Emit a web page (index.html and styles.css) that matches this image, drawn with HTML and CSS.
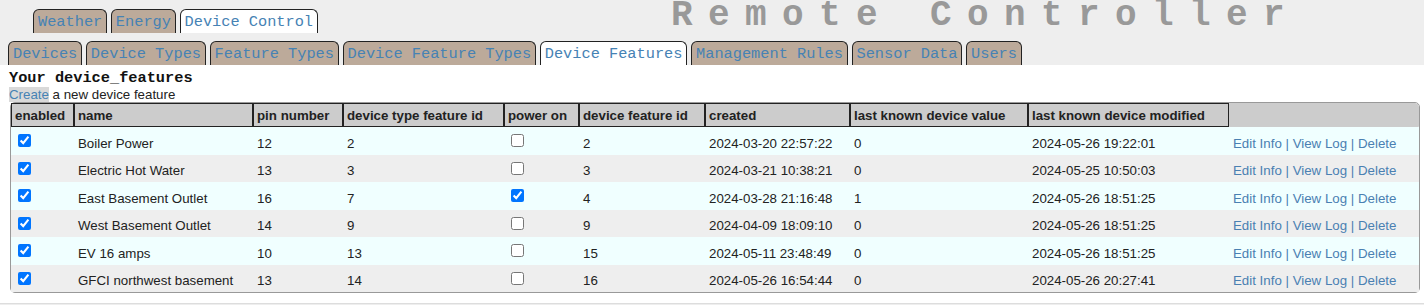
FILE: index.html
```html
<!DOCTYPE html>
<html lang="en">
<head>
    <meta charset="UTF-8">
    <meta name="viewport" content="width=device-width, initial-scale=1.0">
    <title>Remote Controller - Device Features</title>
    <link rel="stylesheet" href="styles.css">
</head>
<body>

    <header class="top">
        <div class="top-row">
            <nav class="tabs main-tabs">
                <a href="#" class="tab">Weather</a>
                <a href="#" class="tab">Energy</a>
                <a href="#" class="tab active">Device Control</a>
            </nav>
            <h1 class="title">Remote Controller</h1>
        </div>
        <nav class="tabs sub-tabs">
            <a href="#" class="tab">Devices</a>
            <a href="#" class="tab">Device Types</a>
            <a href="#" class="tab">Feature Types</a>
            <a href="#" class="tab">Device Feature Types</a>
            <a href="#" class="tab active">Device Features</a>
            <a href="#" class="tab">Management Rules</a>
            <a href="#" class="tab">Sensor Data</a>
            <a href="#" class="tab">Users</a>
        </nav>
    </header>

    <section class="content">
        <h2>Your device_features</h2>
        <p class="create-line"><a href="#" class="create">Create</a> a new device feature</p>

        <table class="features">
            <thead>
                <tr>
                    <th class="c-enabled">enabled</th>
                    <th class="c-name">name</th>
                    <th class="c-pin">pin number</th>
                    <th class="c-dtf">device type feature id</th>
                    <th class="c-power">power on</th>
                    <th class="c-df">device feature id</th>
                    <th class="c-created">created</th>
                    <th class="c-value">last known device value</th>
                    <th class="c-modified">last known device modified</th>
                    <th class="c-actions"></th>
                </tr>
            </thead>
            <tbody>
                <tr>
                    <td class="check"><input type="checkbox" checked></td>
                    <td>Boiler Power</td>
                    <td>12</td>
                    <td>2</td>
                    <td class="check"><input type="checkbox"></td>
                    <td>2</td>
                    <td>2024-03-20 22:57:22</td>
                    <td>0</td>
                    <td>2024-05-26 19:22:01</td>
                    <td class="actions"><a href="#">Edit Info</a> | <a href="#">View Log</a> | <a href="#">Delete</a></td>
                </tr>
                <tr>
                    <td class="check"><input type="checkbox" checked></td>
                    <td>Electric Hot Water</td>
                    <td>13</td>
                    <td>3</td>
                    <td class="check"><input type="checkbox"></td>
                    <td>3</td>
                    <td>2024-03-21 10:38:21</td>
                    <td>0</td>
                    <td>2024-05-25 10:50:03</td>
                    <td class="actions"><a href="#">Edit Info</a> | <a href="#">View Log</a> | <a href="#">Delete</a></td>
                </tr>
                <tr>
                    <td class="check"><input type="checkbox" checked></td>
                    <td>East Basement Outlet</td>
                    <td>16</td>
                    <td>7</td>
                    <td class="check"><input type="checkbox" checked></td>
                    <td>4</td>
                    <td>2024-03-28 21:16:48</td>
                    <td>1</td>
                    <td>2024-05-26 18:51:25</td>
                    <td class="actions"><a href="#">Edit Info</a> | <a href="#">View Log</a> | <a href="#">Delete</a></td>
                </tr>
                <tr>
                    <td class="check"><input type="checkbox" checked></td>
                    <td>West Basement Outlet</td>
                    <td>14</td>
                    <td>9</td>
                    <td class="check"><input type="checkbox"></td>
                    <td>9</td>
                    <td>2024-04-09 18:09:10</td>
                    <td>0</td>
                    <td>2024-05-26 18:51:25</td>
                    <td class="actions"><a href="#">Edit Info</a> | <a href="#">View Log</a> | <a href="#">Delete</a></td>
                </tr>
                <tr>
                    <td class="check"><input type="checkbox" checked></td>
                    <td>EV 16 amps</td>
                    <td>10</td>
                    <td>13</td>
                    <td class="check"><input type="checkbox"></td>
                    <td>15</td>
                    <td>2024-05-11 23:48:49</td>
                    <td>0</td>
                    <td>2024-05-26 18:51:25</td>
                    <td class="actions"><a href="#">Edit Info</a> | <a href="#">View Log</a> | <a href="#">Delete</a></td>
                </tr>
                <tr>
                    <td class="check"><input type="checkbox" checked></td>
                    <td>GFCI northwest basement</td>
                    <td>13</td>
                    <td>14</td>
                    <td class="check"><input type="checkbox"></td>
                    <td>16</td>
                    <td>2024-05-26 16:54:44</td>
                    <td>0</td>
                    <td>2024-05-26 20:27:41</td>
                    <td class="actions"><a href="#">Edit Info</a> | <a href="#">View Log</a> | <a href="#">Delete</a></td>
                </tr>
            </tbody>
        </table>
    </section>

</body>
</html>
```

FILE: styles.css
```css
body {
    margin: 0;
    background: #eeeeee;
    font-family: "Liberation Sans", Arial, sans-serif;
    font-size: 13.3px;
    color: #222;
}

/* header + tabs */

.top {
    height: 65px;
}

.top-row {
    display: flex;
    align-items: flex-start;
    height: 41px;
}

.tabs {
    display: flex;
    gap: 3.6px;
}

.main-tabs {
    margin: 9px 0 0 33px;
}

.sub-tabs {
    margin-left: 8px;
}

.tab {
    display: block;
    height: 22px;
    line-height: 23px;
    padding: 1px 4px 0;
    background: #bcaa9a;
    border: 1px solid #222;
    border-bottom: none;
    border-radius: 6px 6px 0 0;
    font-family: "Liberation Mono", "Courier New", monospace;
    font-size: 15.3px;
    color: #4682b4;
    text-decoration: none;
}

.tab.active {
    background: #ffffff;
}

.title {
    margin: 0 124px 0 auto;
    font-family: "Liberation Mono", "Courier New", monospace;
    font-size: 36px;
    font-weight: bold;
    line-height: 31px;
    letter-spacing: 15.4px;
    color: #999999;
    white-space: nowrap;
}

/* content panel */

.content {
    background: #ffffff;
    padding: 5px 4px 10px 9px;
    border-bottom: 1px solid #dddddd;
}

.content h2 {
    margin: 0;
    font-family: "Liberation Mono", "Courier New", monospace;
    font-size: 15.3px;
    line-height: 17px;
    color: #111;
}

.create-line {
    margin: 0;
    line-height: 15px;
}

.create {
    background: #d9d9d9;
    color: #4682b4;
    text-decoration: none;
}

/* table */

.features {
    margin-left: 1px;
    width: calc(100% - 1px);
    table-layout: fixed;
    border-collapse: separate;
    border-spacing: 0;
    border: 1px solid #999999;
    border-radius: 5px;
}

.features th {
    box-sizing: border-box;
    height: 24px;
    padding: 0 3px;
    background: #cccccc;
    border: 1px solid #222;
    text-align: left;
    font-weight: bold;
    white-space: nowrap;
    overflow: hidden;
}

.features th.c-actions {
    border-color: #cccccc;
    border-top-right-radius: 4px;
}

.c-enabled { width: 63px; }
.c-name { width: 179px; }
.c-pin { width: 90px; }
.c-dtf { width: 161px; }
.c-power { width: 75px; }
.c-df { width: 126px; }
.c-created { width: 145px; }
.c-value { width: 178px; }
.c-modified { width: 201px; }

.features td {
    box-sizing: border-box;
    height: 27.5px;
    padding: 5px 4px 0;
    vertical-align: middle;
    white-space: nowrap;
}

.features tbody tr:nth-child(odd) td {
    background: #f0ffff;
}

.features tbody tr:nth-child(even) td {
    background: #eeeeee;
}

.features td.check {
    vertical-align: top;
    padding: 7px 0 0 7px;
}

.features td.check input {
    display: block;
    margin: 0;
    width: 13px;
    height: 13px;
}

.actions,
.actions a {
    color: #4a80b2;
    text-decoration: none;
}
```
